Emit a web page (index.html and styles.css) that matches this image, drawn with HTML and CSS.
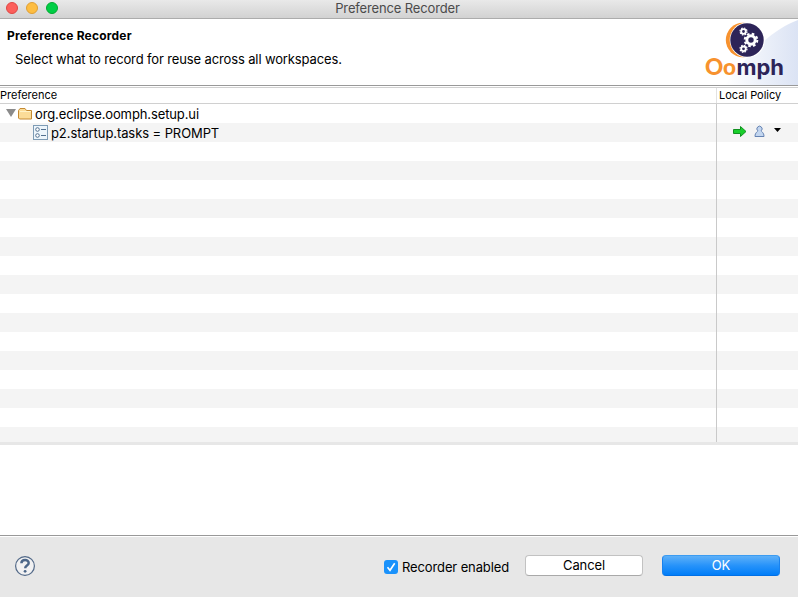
FILE: index.html
```html
<!DOCTYPE html>
<html lang="en">
<head>
<meta charset="utf-8">
<title>Preference Recorder</title>
<link rel="stylesheet" href="styles.css">
</head>
<body>
<div class="window">
  <header class="titlebar">
    <div class="lights"><i class="light close"></i><i class="light minimize"></i><i class="light maximize"></i></div>
    <span class="window-title">Preference Recorder</span>
  </header>
  <section class="banner">
    <div class="banner-text">
      <h1>Preference Recorder</h1>
      <p>Select what to record for reuse across all workspaces.</p>
    </div>
    <svg class="logo" width="98" height="66" viewBox="700 19 98 66">
      <defs>
        <linearGradient id="sweep" x1="0" y1="0" x2="1" y2="0"><stop offset="0" stop-color="#fff"/><stop offset="1" stop-color="#dbe3f4"/></linearGradient>
      </defs>
      <path d="M798 20C776 28 752 48 725 85H798Z" fill="url(#sweep)"/>
      <circle cx="743" cy="40" r="17.2" fill="#f7922e"/>
      <circle cx="747.3" cy="40" r="17.6" fill="#fff"/>
      <circle cx="747" cy="40" r="16.7" fill="#2d2458"/>
      <g fill="none" stroke="#fff">
        <circle cx="751" cy="40" r="4.2" stroke-width="3"/>
        <circle cx="751" cy="40" r="6.3" stroke-width="2" stroke-dasharray="2.6 2.348"/>
        <circle cx="743.5" cy="31.5" r="2.300" stroke-width="1.800"/>
        <circle cx="743.5" cy="31.500" r="3.500" stroke-width="1.200" stroke-dasharray="1.500 1.249"/>
        <circle cx="743.500" cy="48.800" r="2.300" stroke-width="1.800"/>
        <circle cx="743.500" cy="48.800" r="3.500" stroke-width="1.200" stroke-dasharray="1.500 1.249"/>
      </g>
      <text class="wordmark" y="74.5"><tspan x="705" class="warm">Oo</tspan></text>
      <text class="wordmark" x="736.500" y="74.500" textLength="47.500" lengthAdjust="spacingAndGlyphs">mph</text>
    </svg>
  </section>
  <div class="table-head"><span class="col-main">Preference</span><span class="col-policy">Local Policy</span></div>
  <main class="tree">
    <div class="col-main">
      <div class="row parent">
        <svg width="35" height="19"><path d="M6 5h10l-5 8z" fill="#8b8b8b"/><path d="M18.5 14V6.500l1.500-2h5l1.500 2H31.500V15h-12z" fill="#fbdc98" stroke="#c58a32"/><path d="M20 7.500h11" stroke="#fff3c8"/></svg>
        <span class="label-parent">org.eclipse.oomph.setup.ui</span>
      </div>
      <div class="row child">
        <svg width="51" height="19"><rect x="33.500" y="2.500" width="14" height="14" fill="#edf5fb" stroke="#7d9bb5"/><g fill="#fff" stroke="#52708f"><circle cx="37.500" cy="6.500" r="1.800"/><circle cx="37.500" cy="12.500" r="1.800"/><path d="M41 6.500h5M41 12.500h5"/></g></svg>
        <span class="label-child">p2.startup.tasks = PROMPT</span>
      </div>
    </div>
    <div class="col-policy">
      <div class="row"></div>
      <div class="row">
        <svg width="81" height="19" viewBox="717 123 81 19">
          <path d="M733.500 129.500h7v-3l5.500 5-5.500 5v-3h-7z" fill="#19cf2b" stroke="#119020"/>
          <path d="M757.800 130.800a2.600 2.600 0 1 1 3.400 0c.2 1.200 2.800 1.600 2.800 5.700h-9c0-4.100 2.600-4.500 2.800-5.700z" fill="#c3d6ef" stroke="#6482b2"/>
          <path d="M774 128h7l-3.500 4z" fill="#000"/>
        </svg>
      </div>
    </div>
  </main>
  <div class="sash"></div>
  <section class="details"></section>
  <footer class="footer">
    <svg class="help" width="20" height="20" viewBox="0 0 20 20"><circle cx="10" cy="10" r="9.400" fill="#f1f1f2" stroke="#526988" stroke-width="1.200"/><path d="M6.400 7.200C6.500 3 13.700 3 13.700 7c0 2.600-3.500 2.500-3.500 5.200" fill="none" stroke="#4c6688" stroke-width="2.500"/><circle cx="10.100" cy="15.300" r="1.400" fill="#4c6688"/></svg>
    <label class="check"><svg width="14" height="14"><rect width="14" height="14" rx="3" fill="#1a92fb"/><path d="M3.500 7.300l2.500 3 4.700-7" fill="none" stroke="#fff" stroke-width="1.600"/></svg><span>Recorder enabled</span></label>
    <button class="btn cancel"><span>Cancel</span></button>
    <button class="btn ok"><span>OK</span></button>
  </footer>
</div>
</body>
</html>
```
FILE: styles.css
```css
* { box-sizing: border-box; }
body { margin: 0; background: #fff; font: 13px/19px Inter, "Liberation Sans", sans-serif; color: #000; }
.window { width: 798px; height: 597px; display: flex; flex-direction: column; overflow: hidden; }
.window span, .window p, .window h1 { white-space: nowrap; }
.titlebar { height: 19px; flex: none; display: grid; grid-template-columns: 100px 1fr 100px; background: linear-gradient(#e9e9e9, #d2d2d2); border-bottom: 1px solid #acacac; }
.lights { display: flex; gap: 8px; padding: 2px 0 0 6px; }
.light { width: 12px; height: 12px; border-radius: 50%; border: 1px solid; }
.close { background: #fc5f5b; border-color: #df4744; }
.minimize { background: #fdbd41; border-color: #df9f35; }
.maximize { background: #00ce45; border-color: #00aa30; }
.window-title { text-align: center; line-height: 17px; padding-right: 3px; letter-spacing: -.14px; color: #4b4b4b; }
.banner { height: 67px; flex: none; display: flex; justify-content: space-between; border-bottom: 1px solid #999; }
.banner-text { padding: 9px 0 0 7px; }
h1 { margin: 0; font-size: 12px; line-height: 16px; font-weight: 700; letter-spacing: .2px; }
.banner p { margin: 6px 0 0 8px; letter-spacing: -.13px; }
.logo { flex: none; }
.wordmark { font: 700 22px Inter, sans-serif; fill: #2d2458; }
.wordmark .warm { font: 900 22.5px Lato, sans-serif; fill: #f7922e; }
.table-head { flex: none; height: 17px; margin-top: 1px; display: flex; border: solid #d0d0d0; border-width: 1px 0; font-size: 11px; line-height: 15px; }
.col-main { width: 716px; flex: none; }
.col-policy { width: 82px; border-left: 1px solid #c9c9c9; }
.table-head .col-policy { padding-left: 2px; border-color: #e2e2e2; }
.tree { height: 338px; flex: none; display: flex; background: repeating-linear-gradient(#fff 0 19px, #f4f4f4 19px 38px); }
.row { height: 19px; display: flex; line-height: 21px; }
.row svg { flex: none; }
.label-parent { letter-spacing: -.115px; }
.label-child { letter-spacing: -.085px; }
.sash { height: 3px; flex: none; background: #e7e7e7; }
.details { height: 90px; flex: none; }
.footer { flex: 1; display: flex; align-items: flex-start; background: #e7e7e7; border-top: 1px solid #999; box-shadow: inset 0 1px #fff; padding: 19px 18px 0 15px; }
.help { flex: none; margin-top: 1px; }
.check { display: flex; width: 141px; margin-left: 349px; padding-top: 5px; gap: 4px; line-height: 15px; letter-spacing: -.12px; }
.check svg { flex: none; }
.btn { width: 118px; height: 21px; padding: 0; font: inherit; line-height: 19px; border: 1px solid #c2c2c2; border-bottom-color: #a9a9a9; border-radius: 4px; background: #fff; color: #000; }
.cancel { letter-spacing: -.1px; }
.ok { margin-left: 19px; color: #fff; background: linear-gradient(#5eb0f8, #2793fa 50%, #007df8); border-color: #3c9cf1 #1982ee #006fe5; }
```
